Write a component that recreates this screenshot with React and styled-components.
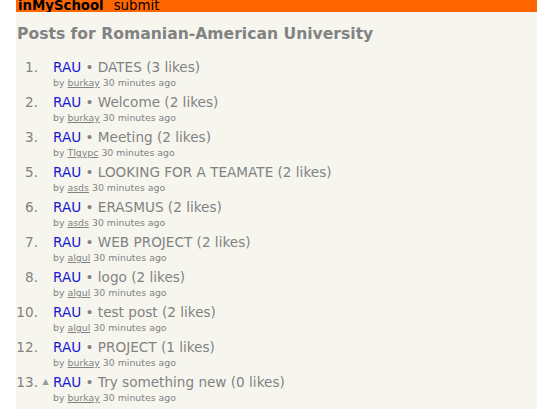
import React from 'react';
import styled, { createGlobalStyle } from 'styled-components';

const GlobalStyle = createGlobalStyle`
  html, body {
    margin: 0;
    padding: 0;
    background: #ffffff;
    font-family: 'DejaVu Sans', Verdana, sans-serif;
  }
`;

const Page = styled.div`
  margin-left: 16px;
  min-height: 100vh;
  background-color: #f6f6ef;
  overflow: hidden;
`;

const TopBar = styled.div`
  height: 12px;
  background-color: #ff6600;
  display: flex;
  align-items: flex-end;
  gap: 10px;
  padding-left: 2px;
  overflow: hidden;
  font-size: 13.3px;
  line-height: 13px;
  color: #000;
  white-space: nowrap;
`;

const Brand = styled.span`
  font-weight: bold;
`;

const Heading = styled.div`
  font-size: 15.6px;
  font-weight: bold;
  color: #828282;
  padding: 13px 0 0 1px;
  height: 29px;
`;

const List = styled.div`
  display: flex;
  flex-direction: column;
  padding-top: 4px;
`;

const Item = styled.div`
  display: grid;
  grid-template-columns: 22px 15px 1fr;
  height: 35px;
`;

const Rank = styled.div`
  text-align: right;
  font-size: 13.6px;
  line-height: 18px;
  color: #828282;
`;

const Vote = styled.div`
  font-size: 8px;
  line-height: 18px;
  color: #9a9a9a;
  text-align: center;
`;

const Body = styled.div`
  display: flex;
  flex-direction: column;
`;

const TitleLine = styled.div`
  font-size: 13.6px;
  line-height: 18px;
  color: #828282;
  white-space: nowrap;
`;

const Source = styled.span`
  color: #1818cc;
`;

const Sub = styled.div`
  font-size: 9.4px;
  line-height: 12px;
  padding-top: 1px;
  color: #828282;
`;

const User = styled.span`
  text-decoration: underline;
`;

const posts = [
  { rank: 1, title: 'DATES', likes: 3, user: 'burkay' },
  { rank: 2, title: 'Welcome', likes: 2, user: 'burkay' },
  { rank: 3, title: 'Meeting', likes: 2, user: 'Tlgypc' },
  { rank: 5, title: 'LOOKING FOR A TEAMATE', likes: 2, user: 'asds' },
  { rank: 6, title: 'ERASMUS', likes: 2, user: 'asds' },
  { rank: 7, title: 'WEB PROJECT', likes: 2, user: 'algul' },
  { rank: 8, title: 'logo', likes: 2, user: 'algul' },
  { rank: 10, title: 'test post', likes: 2, user: 'algul' },
  { rank: 12, title: 'PROJECT', likes: 1, user: 'burkay' },
  { rank: 13, title: 'Try something new', likes: 0, user: 'burkay', votable: true },
];

export default function App() {
  return (
    <Page>
      <GlobalStyle />
      <TopBar>
        <Brand>inMySchool</Brand>
        <span>submit</span>
      </TopBar>
      <Heading>Posts for Romanian-American University</Heading>
      <List>
        {posts.map((p) => (
          <Item key={p.rank}>
            <Rank>{p.rank}.</Rank>
            <Vote>{p.votable ? '▲' : ''}</Vote>
            <Body>
              <TitleLine>
                <Source>RAU</Source> • {p.title} ({p.likes} likes)
              </TitleLine>
              <Sub>
                by <User>{p.user}</User> 30 minutes ago
              </Sub>
            </Body>
          </Item>
        ))}
      </List>
    </Page>
  );
}
